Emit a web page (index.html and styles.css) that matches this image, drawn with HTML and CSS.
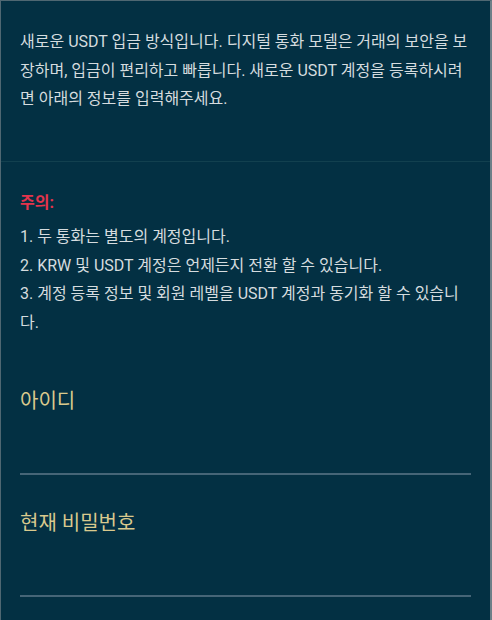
FILE: index.html
```html
<!DOCTYPE html>
<html lang="ko">
<head>
<meta charset="utf-8">
<link rel="stylesheet" href="styles.css">
</head>
<body>
<div class="page">
  <section class="intro">
    <p>새로운 USDT 입금 방식입니다. 디지털 통화 모델은 거래의 보안을 보장하며, 입금이 편리하고 빠릅니다. 새로운 USDT 계정을 등록하시려면 아래의 정보를 입력해주세요.</p>
  </section>
  <section class="notice">
    <h3 class="notice-title">주의:</h3>
    <ol class="notice-list">
      <li>1. 두 통화는 별도의 계정입니다.</li>
      <li>2. KRW 및 USDT 계정은 언제든지 전환 할 수 있습니다.</li>
      <li>3. 계정 등록 정보 및 회원 레벨을 USDT 계정과 동기화 할 수 있습니다.</li>
    </ol>
  </section>
  <form class="form">
    <div class="field">
      <label class="field-label">아이디</label>
      <input class="field-input" type="text">
    </div>
    <div class="field">
      <label class="field-label">현재 비밀번호</label>
      <input class="field-input" type="password">
    </div>
  </form>
</div>
</body>
</html>
```

FILE: styles.css
```css
html, body {
  margin: 0;
  padding: 0;
  background: #033043;
}
body {
  font-family: Roboto, "Noto Sans CJK KR", sans-serif;
  color: #d5dcdf;
}
.page {
  width: 492px;
  height: 620px;
  box-sizing: border-box;
  border-top: 1px solid #4f6772;
  border-left: 1px solid #4f6772;
  border-right: 2px solid #6d7f88;
  background: #033043;
  overflow: hidden;
}
.intro {
  padding: 27px 19px 47px 19px;
  border-bottom: 1px solid #12404f;
}
.intro p {
  margin: 0;
  font-size: 16px;
  line-height: 28.5px;
}
.notice {
  padding: 27px 19px 0 19px;
}
.notice-title {
  margin: 0 0 6px 0;
  font-size: 16px;
  line-height: 28.5px;
  font-weight: 700;
  color: #e4344c;
}
.notice-list {
  margin: 0;
  padding: 0;
  list-style: none;
  font-size: 16px;
  line-height: 28.5px;
}
.form {
  padding: 50px 19px 0 19px;
  display: flex;
  flex-direction: column;
  gap: 34px;
}
.field {
  display: flex;
  flex-direction: column;
  border-bottom: 2px solid #466577;
}
.field-label {
  font-size: 20px;
  line-height: 28px;
  color: #d9c98d;
}
.field-input {
  height: 58px;
  background: transparent;
  border: none;
  outline: none;
  color: #d5dcdf;
  font-size: 16px;
  padding: 0;
}
```
